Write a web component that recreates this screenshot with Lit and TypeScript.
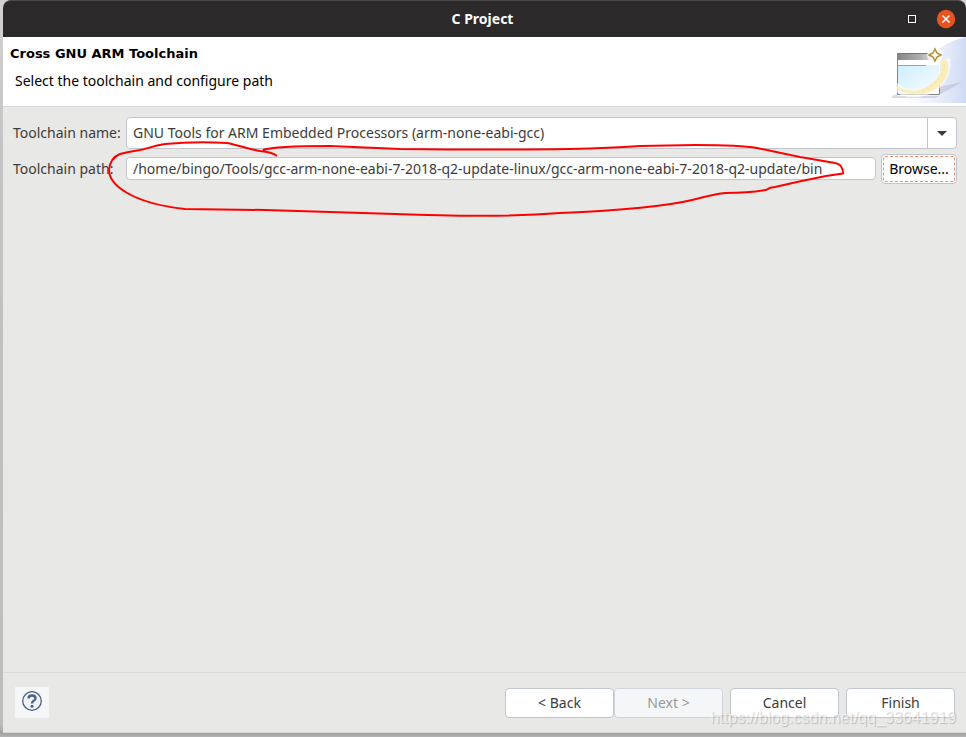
import { LitElement, html, css, svg } from "lit";
import { customElement, property } from "lit/decorators.js";

const wizardBanner = svg`
  <svg class="banner" viewBox="0 0 74 66" width="74" height="66" aria-hidden="true">
    <defs>
      <linearGradient id="glow" x1="0" y1="0" x2="1" y2="0">
        <stop offset="0" stop-color="#fff" stop-opacity="0" />
        <stop offset="1" stop-color="#cfdbf3" />
      </linearGradient>
      <linearGradient id="bar" x1="0" y1="0" x2="1" y2="0">
        <stop offset="0" stop-color="#858585" />
        <stop offset=".6" stop-color="#b0b0b0" />
        <stop offset="1" stop-color="#f2f2f2" />
      </linearGradient>
      <linearGradient id="pane" x1="0" y1="0" x2="1" y2="1">
        <stop offset="0" stop-color="#cdeefc" />
        <stop offset="1" stop-color="#fafdff" />
      </linearGradient>
    </defs>
    <path d="M0 66V58L30 30Q46 6 74 0V66Z" fill="url(#glow)" />
    <path d="M0 66V60Q50 54 56 26Q64 22 74 21V66Z" fill="url(#glow)" opacity=".6" />
    <path d="M47 50L70 45L58 52L47 58Z" fill="#bcb8d6" opacity=".55" />
    <path d="M0 59L6 56V59H47L44 61H0Z" fill="#bcb8d6" opacity=".5" />
    <rect x="5" y="16" width="43" height="42" fill="#fff" />
    <rect x="5" y="16" width="40" height="7" fill="url(#bar)" />
    <path d="M5 16.500H36" stroke="#777" />
    <rect x="6" y="28" width="41" height="29" fill="url(#pane)" />
    <path d="M5.500 16V57.500H47.500V46" fill="none" stroke="#858585" />
    <path d="M6 28.500H34" stroke="#9aa5a9" />
    <path d="M3 48Q10 58 27 56Q47 53 53 36Q56 28 54 22" fill="none" stroke="#fff" stroke-width="8" opacity=".6" />
    <path d="M3 48Q12 55 27 53Q42 48 48 36Q50 30 48 25Q51 21 55 24Q58 32 54 40Q47 54 30 57Q9 59 3 48Z" fill="#fbeebb" />
    <path d="M30 54Q45 48 51 36Q53 31 52 26" fill="none" stroke="#f5e5ab" stroke-width="2" stroke-dasharray="2 3" />
    <circle cx="43" cy="18" r="8" fill="#fff" opacity=".75" />
    <path d="M43 12L45 16L49 18L45 20L43 24L41 20L37 18L41 16Z" fill="#fffbe6" stroke="#b3903c" stroke-width="1.500" />
  </svg>`;

const penMark = svg`
  <svg class="pen" viewBox="0 0 966 240" width="966" height="240" aria-hidden="true">
    <path d="M277 156Q272 152 260 151C248 149 238 145 227 143Q195 141 165 144C150 146 146 150 134 151Q128 152 120 154Q110 158 109 170C109 184 130 203 185 209L265 210L395 214Q500 218 560 213Q655 209 692 200Q715 194 725 193C740 193 755 192 766 190Q770 187 775 187Q800 181 826 176L843 173.500Q843 164 835 163L800 157Q775 152 757 148Q740 145 696 145L640 146Q610 148 570 149Q500 150 400 149L330 146Q275 146 263 150" />
  </svg>`;

@customElement("title-bar")
export class TitleBar extends LitElement {
  @property() heading = "";

  static styles = css`
    :host {
      display: grid;
      grid-template-columns: 1fr auto 1fr;
      align-items: center;
      height: 37px;
      box-sizing: border-box;
      border-top: 1px solid #4a4848;
      border-radius: 8px 8px 0 0;
      background: #2b2929;
      color: #fff;
    }
    .name {
      grid-column: 2;
      margin: 0;
      padding-right: 4px;
      font: bold 14px/20px "Noto Sans", sans-serif;
    }
    .controls {
      display: flex;
      justify-content: flex-end;
      align-items: center;
      gap: 14px;
      padding-right: 10px;
    }
    .control {
      display: grid;
      place-items: center;
      width: 20px;
      height: 20px;
      padding: 0;
      border: 0;
      background: none;
    }
  `;

  render() {
    return html`
      <h1 class="name">${this.heading}</h1>
      <div class="controls">
        <button class="control" aria-label="Maximize">
          <svg width="20" height="20" viewBox="0 0 20 20">
            <rect x="6.500" y="6.500" width="7" height="7" fill="none" stroke="#fff" />
          </svg>
        </button>
        <button class="control" aria-label="Close">
          <svg width="20" height="20" viewBox="0 0 20 20">
            <circle cx="10" cy="10" r="9.200" fill="#e95420" />
            <path d="M6.500 6.500L13.500 13.500M13.500 6.500L6.500 13.500" stroke="#fff" stroke-width="1.500" />
          </svg>
        </button>
      </div>
    `;
  }
}

@customElement("app-root")
export class AppRoot extends LitElement {
  static styles = css`
    :host {
      display: block;
      position: relative;
      box-sizing: border-box;
      min-height: 100vh;
      padding: 0 0 4px 3px;
      overflow: hidden;
      background: linear-gradient(to top, #b4b4b4, #a2a2a2 4px, #bcbcbc 12px, #c4c4c4 80%, #d2d2d2);
      font: 14px/20px "Noto Sans", sans-serif;
      color: #3c3c3c;
    }
    .dialog {
      display: flex;
      flex-direction: column;
      min-height: calc(100vh - 4px);
      box-sizing: border-box;
      border-bottom: 1px solid #d6d6d4;
      border-radius: 8px 8px 0 0;
      background: #e8e8e7;
    }
    .intro {
      display: flex;
      justify-content: space-between;
      height: 69px;
      border-bottom: 1px solid #d9dadd;
      background: #fff;
      color: #000;
    }
    .words {
      padding: 7px;
    }
    .heading {
      margin: 0;
      font: bold 13px/20px "DejaVu Sans", sans-serif;
    }
    .hint {
      margin: 7px 0 0;
      padding-left: 5px;
    }
    .form {
      flex: 1;
      display: grid;
      grid-template-columns: 108px 1fr;
      align-content: start;
      align-items: center;
      gap: 5px;
      padding: 10px 9px 10px 10px;
    }
    .label {
      white-space: nowrap;
    }
    .combo {
      position: relative;
      display: grid;
    }
    .select,
    .input,
    .button {
      box-sizing: border-box;
      margin: 0;
      border: 1px solid #c1c5ce;
      border-radius: 4px;
      background: #fff;
      color: inherit;
      font: inherit;
    }
    .select {
      appearance: none;
      width: 100%;
      height: 32px;
      padding: 0 36px 0 6px;
    }
    .arrow {
      position: absolute;
      top: 1px;
      right: 1px;
      bottom: 1px;
      display: grid;
      place-items: center;
      width: 28px;
      border-left: 1px solid #c1c5ce;
      pointer-events: none;
    }
    .path {
      display: flex;
      align-items: center;
      gap: 5px;
    }
    .input {
      flex: 1;
      min-width: 0;
      height: 23px;
      margin-bottom: 1px;
      padding: 0 6px 1px;
    }
    .button {
      width: 109px;
      height: 30px;
      padding: 0;
    }
    .button:disabled {
      border-color: #d0d4dc;
      background: #f4f6f8;
      color: #999;
    }
    .browse {
      width: 76px;
      color: #000;
      outline: 1px dashed #ef8f70;
      outline-offset: -3px;
    }
    .footer {
      display: flex;
      align-items: center;
      justify-content: space-between;
      height: 59px;
      padding: 0 11px 0 12px;
      border-top: 1px solid #dadbdd;
    }
    .help {
      display: grid;
      place-items: center;
      width: 34px;
      height: 31px;
      padding: 0 0 3px;
      border: 0;
      background: #f4f6f8;
    }
    .actions {
      display: flex;
      gap: 7px;
    }
    .steps {
      display: flex;
    }
    .pen {
      position: absolute;
      top: 0;
      left: 0;
      pointer-events: none;
      fill: none;
      stroke: #f00;
      stroke-width: 2;
      stroke-linejoin: round;
    }
    .watermark {
      position: absolute;
      right: 10px;
      bottom: 9px;
      pointer-events: none;
      font: 16px/20px "Liberation Sans", sans-serif;
      color: rgba(255, 255, 255, 0.6);
      text-shadow: 1px 1px 1px rgba(0, 0, 0, 0.2);
    }
  `;

  render() {
    return html`
      <main class="dialog">
        <title-bar heading="C Project"></title-bar>
        <header class="intro">
          <div class="words">
            <h2 class="heading">Cross GNU ARM Toolchain</h2>
            <p class="hint">Select the toolchain and configure path</p>
          </div>
          ${wizardBanner}
        </header>
        <section class="form">
          <label class="label" for="name">Toolchain name:</label>
          <div class="combo">
            <select class="select" id="name">
              <option>GNU Tools for ARM Embedded Processors (arm-none-eabi-gcc)</option>
            </select>
            <span class="arrow">
              <svg width="10" height="6" viewBox="0 0 10 6"><path d="M0 1H10L5 6Z" fill="#3c3c3c" /></svg>
            </span>
          </div>
          <label class="label" for="path">Toolchain path:</label>
          <div class="path">
            <input
              class="input"
              id="path"
              type="text"
              spellcheck="false"
              value="/home/bingo/Tools/gcc-arm-none-eabi-7-2018-q2-update-linux/gcc-arm-none-eabi-7-2018-q2-update/bin"
            />
            <button class="button browse">Browse...</button>
          </div>
        </section>
        <footer class="footer">
          <button class="help" aria-label="Help">
            <svg width="20" height="20" viewBox="1 1 20 20">
              <circle cx="11" cy="11" r="9.300" fill="#f1f2f4" stroke="#4d5f85" stroke-width="1.300" />
              <path d="M7.500 8.500Q7.500 5.500 11 5.500Q14.500 5.500 14.500 8.300Q14.500 10 12.500 11Q11 11.800 11 13.500" fill="none" stroke="#4d5f85" stroke-width="2.400" />
              <circle cx="11" cy="16.300" r="1.500" fill="#4d5f85" />
            </svg>
          </button>
          <div class="actions">
            <div class="steps">
              <button class="button">&lt; Back</button>
              <button class="button" disabled>Next &gt;</button>
            </div>
            <button class="button">Cancel</button>
            <button class="button">Finish</button>
          </div>
        </footer>
      </main>
      ${penMark}
      <div class="watermark">https://blog.csdn.net/qq_33641919</div>
    `;
  }
}
